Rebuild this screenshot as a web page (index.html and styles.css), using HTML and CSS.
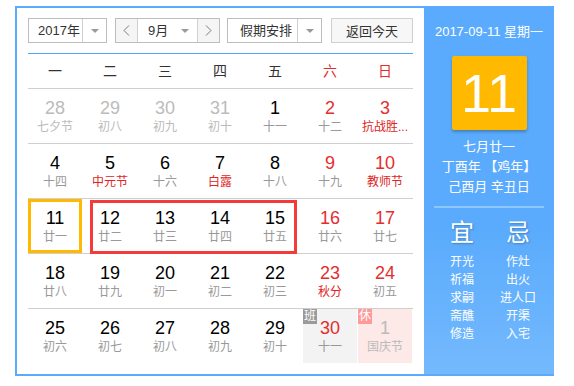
FILE: index.html
```html
<!DOCTYPE html>
<html>
	<head>
		<meta charset="utf-8">
		<title>万年历</title>
		<link rel="stylesheet" href="styles.css">
	</head>
	<body>
		<div class="cal">
			<div class="main">
				<div class="toolbar">
					<div class="select year">
						<span class="val">2017年</span>
						<span class="drop"><i class="tri"></i></span>
					</div>
					<div class="select month">
						<span class="nav prev"><svg width="7" height="11" viewBox="0 0 7 11"><polyline points="6,0.5 1,5.5 6,10.5" fill="none" stroke="#7a7a7a" stroke-width="1"/></svg></span>
						<span class="val">9月<i class="tri"></i></span>
						<span class="nav next"><svg width="7" height="11" viewBox="0 0 7 11"><polyline points="1,0.5 6,5.5 1,10.5" fill="none" stroke="#7a7a7a" stroke-width="1"/></svg></span>
					</div>
					<div class="select holiday">
						<span class="val">假期安排</span>
						<span class="drop"><i class="tri"></i></span>
					</div>
					<button class="today-btn">返回今天</button>
				</div>

				<div class="weekdays">
					<span>一</span><span>二</span><span>三</span><span>四</span><span>五</span>
					<span class="red">六</span><span class="red">日</span>
				</div>

				<div class="week">
					<div class="day other"><b>28</b><em>七夕节</em></div>
					<div class="day other"><b>29</b><em>初八</em></div>
					<div class="day other"><b>30</b><em>初九</em></div>
					<div class="day other"><b>31</b><em>初十</em></div>
					<div class="day"><b>1</b><em>十一</em></div>
					<div class="day weekend"><b>2</b><em>十二</em></div>
					<div class="day weekend fest"><b>3</b><em>抗战胜...</em></div>
				</div>
				<div class="week">
					<div class="day"><b>4</b><em>十四</em></div>
					<div class="day fest"><b>5</b><em>中元节</em></div>
					<div class="day"><b>6</b><em>十六</em></div>
					<div class="day fest"><b>7</b><em>白露</em></div>
					<div class="day"><b>8</b><em>十八</em></div>
					<div class="day weekend"><b>9</b><em>十九</em></div>
					<div class="day weekend fest"><b>10</b><em>教师节</em></div>
				</div>
				<div class="week">
					<div class="day today"><b>11</b><em>廿一</em></div>
					<div class="day"><b>12</b><em>廿二</em></div>
					<div class="day"><b>13</b><em>廿三</em></div>
					<div class="day"><b>14</b><em>廿四</em></div>
					<div class="day"><b>15</b><em>廿五</em></div>
					<div class="day weekend"><b>16</b><em>廿六</em></div>
					<div class="day weekend"><b>17</b><em>廿七</em></div>
					<div class="range"></div>
				</div>
				<div class="week">
					<div class="day"><b>18</b><em>廿八</em></div>
					<div class="day"><b>19</b><em>廿九</em></div>
					<div class="day"><b>20</b><em>初一</em></div>
					<div class="day"><b>21</b><em>初二</em></div>
					<div class="day"><b>22</b><em>初三</em></div>
					<div class="day weekend fest"><b>23</b><em>秋分</em></div>
					<div class="day weekend"><b>24</b><em>初五</em></div>
				</div>
				<div class="week last">
					<div class="day"><b>25</b><em>初六</em></div>
					<div class="day"><b>26</b><em>初七</em></div>
					<div class="day"><b>27</b><em>初八</em></div>
					<div class="day"><b>28</b><em>初九</em></div>
					<div class="day"><b>29</b><em>初十</em></div>
					<div class="day weekend work"><span class="badge">班</span><b>30</b><em>十一</em></div>
					<div class="day other rest"><span class="badge">休</span><b>1</b><em>国庆节</em></div>
				</div>
			</div>

			<div class="side">
				<div class="side-date">2017-09-11 星期一</div>
				<div class="big-day">11</div>
				<div class="lunar">
					<p>七月廿一</p>
					<p>丁酉年 【鸡年】</p>
					<p>己酉月 辛丑日</p>
				</div>
				<div class="almanac">
					<div class="col">
						<h3>宜</h3>
						<p>开光</p><p>祈福</p><p>求嗣</p><p>斋醮</p><p>修造</p>
					</div>
					<div class="col">
						<h3>忌</h3>
						<p>作灶</p><p>出火</p><p>进人口</p><p>开渠</p><p>入宅</p>
					</div>
				</div>
			</div>
		</div>
	</body>
</html>
```

FILE: styles.css
```css
html, body {
	margin: 0;
	padding: 0;
	background: #fff;
}
body {
	font-family: "Liberation Sans", "Noto Sans CJK SC", sans-serif;
	color: #333;
}
*, *:before, *:after {
	box-sizing: border-box;
}

.cal {
	display: flex;
	width: 539px;
	height: 370px;
	margin: 6px 0 0 15px;
	border: 2px solid #5aabfd;
	border-right: 0;
}
.main {
	width: 407px;
	padding: 10px 11px 0 11px;
	background: #fff;
}

/* toolbar */
.toolbar {
	display: flex;
	height: 25px;
	padding-bottom: 10px;
	box-sizing: content-box;
	border-bottom: 1px solid #4ea6f5;
}
.select {
	display: flex;
	height: 25px;
	border: 1px solid #bdbdbd;
	background: #fff;
	font-size: 13px;
	line-height: 23px;
	color: #333;
}
.select .val {
	flex: 1;
	padding-left: 9px;
}
.select .drop {
	width: 24px;
	border-left: 1px solid #d0d0d0;
	display: flex;
	align-items: center;
	justify-content: center;
}
.tri {
	display: inline-block;
	width: 0;
	height: 0;
	border-left: 4px solid transparent;
	border-right: 4px solid transparent;
	border-top: 4px solid #9a9a9a;
}
.year {
	width: 79px;
}
.month {
	width: 105px;
	margin-left: 8px;
}
.month .nav {
	width: 22px;
	background: #f5f5f5;
	display: flex;
	align-items: center;
	justify-content: center;
}
.month .prev {
	border-right: 1px solid #d0d0d0;
}
.month .next {
	border-left: 1px solid #d0d0d0;
}
.month .val {
	display: flex;
	align-items: center;
	justify-content: space-between;
	padding: 0 8px 0 10px;
}
.holiday {
	width: 95px;
	margin-left: 7px;
}
.holiday .val {
	padding-left: 12px;
}
.today-btn {
	width: 82px;
	height: 25px;
	margin-left: 9px;
	padding: 0;
	border: 1px solid #d0d0d0;
	background: #f7f7f7;
	font-family: inherit;
	font-size: 13px;
	color: #333;
}

/* grid */
.weekdays,
.week {
	display: grid;
	grid-template-columns: repeat(7, 54px);
	column-gap: 1px;
	border-bottom: 1px solid #cfcfcf;
}
.weekdays {
	height: 35px;
	line-height: 34px;
	font-size: 14px;
	text-align: center;
	color: #333;
}
.week {
	position: relative;
	height: 55px;
}
.week.last {
	border-bottom: 0;
}
.red {
	color: #e42d2d;
}
.day {
	position: relative;
	height: 54px;
	padding-top: 9px;
	text-align: center;
}
.day b {
	display: block;
	font-weight: normal;
	font-size: 18px;
	line-height: 21px;
	color: #000;
}
.day em {
	display: block;
	font-style: normal;
	font-size: 12px;
	line-height: 16px;
	color: #999;
	white-space: nowrap;
}
.day.weekend b {
	color: #e42d2d;
}
.day.fest em {
	color: #e02424;
}
.day.other b,
.day.other em {
	color: #bbb;
}
.day.today::after {
	content: "";
	position: absolute;
	left: 0;
	top: 0;
	width: 54px;
	height: 54px;
	border: 3px solid #ffb900;
}
.range {
	position: absolute;
	left: 62px;
	top: 1px;
	width: 207px;
	height: 54px;
	border: 3px solid #f43a3a;
}
.day.work {
	background: #f3f3f3;
}
.day.rest {
	background: #fde9e8;
}
.badge {
	position: absolute;
	left: 0;
	top: 0;
	width: 14px;
	height: 15px;
	font-size: 12px;
	line-height: 15px;
	color: #fff;
	background: #9a9a9a;
}
.rest .badge {
	background: #ff9a9a;
}

/* side panel */
.side {
	width: 130px;
	padding-top: 14px;
	background: linear-gradient(#5aabfd 0, #5aabfd 60%, #74b9fd 100%);
	color: #fff;
	text-align: center;
}
.side-date {
	font-size: 13px;
	line-height: 20px;
}
.big-day {
	width: 75px;
	height: 74px;
	margin: 14px auto 0;
	background: #ffb900;
	border-radius: 2px;
	box-shadow: 0 2px 3px rgba(0, 0, 0, 0.25);
	font-size: 54px;
	line-height: 74px;
}
.lunar {
	margin: 7px 10px 0;
	padding-bottom: 9px;
	border-bottom: 2px solid #8ec7fd;
}
.lunar p {
	margin: 0;
	font-size: 13px;
	line-height: 20px;
	white-space: nowrap;
}
.almanac {
	display: flex;
	padding-left: 10px;
	margin-top: 10px;
}
.almanac .col {
	width: 56px;
}
.almanac h3 {
	margin: 0 0 5px;
	font-weight: normal;
	font-size: 24px;
	line-height: 30px;
	text-shadow: 1px 1px 2px rgba(0, 0, 0, 0.25);
}
.almanac p {
	margin: 0;
	font-size: 12px;
	line-height: 18px;
}
```
